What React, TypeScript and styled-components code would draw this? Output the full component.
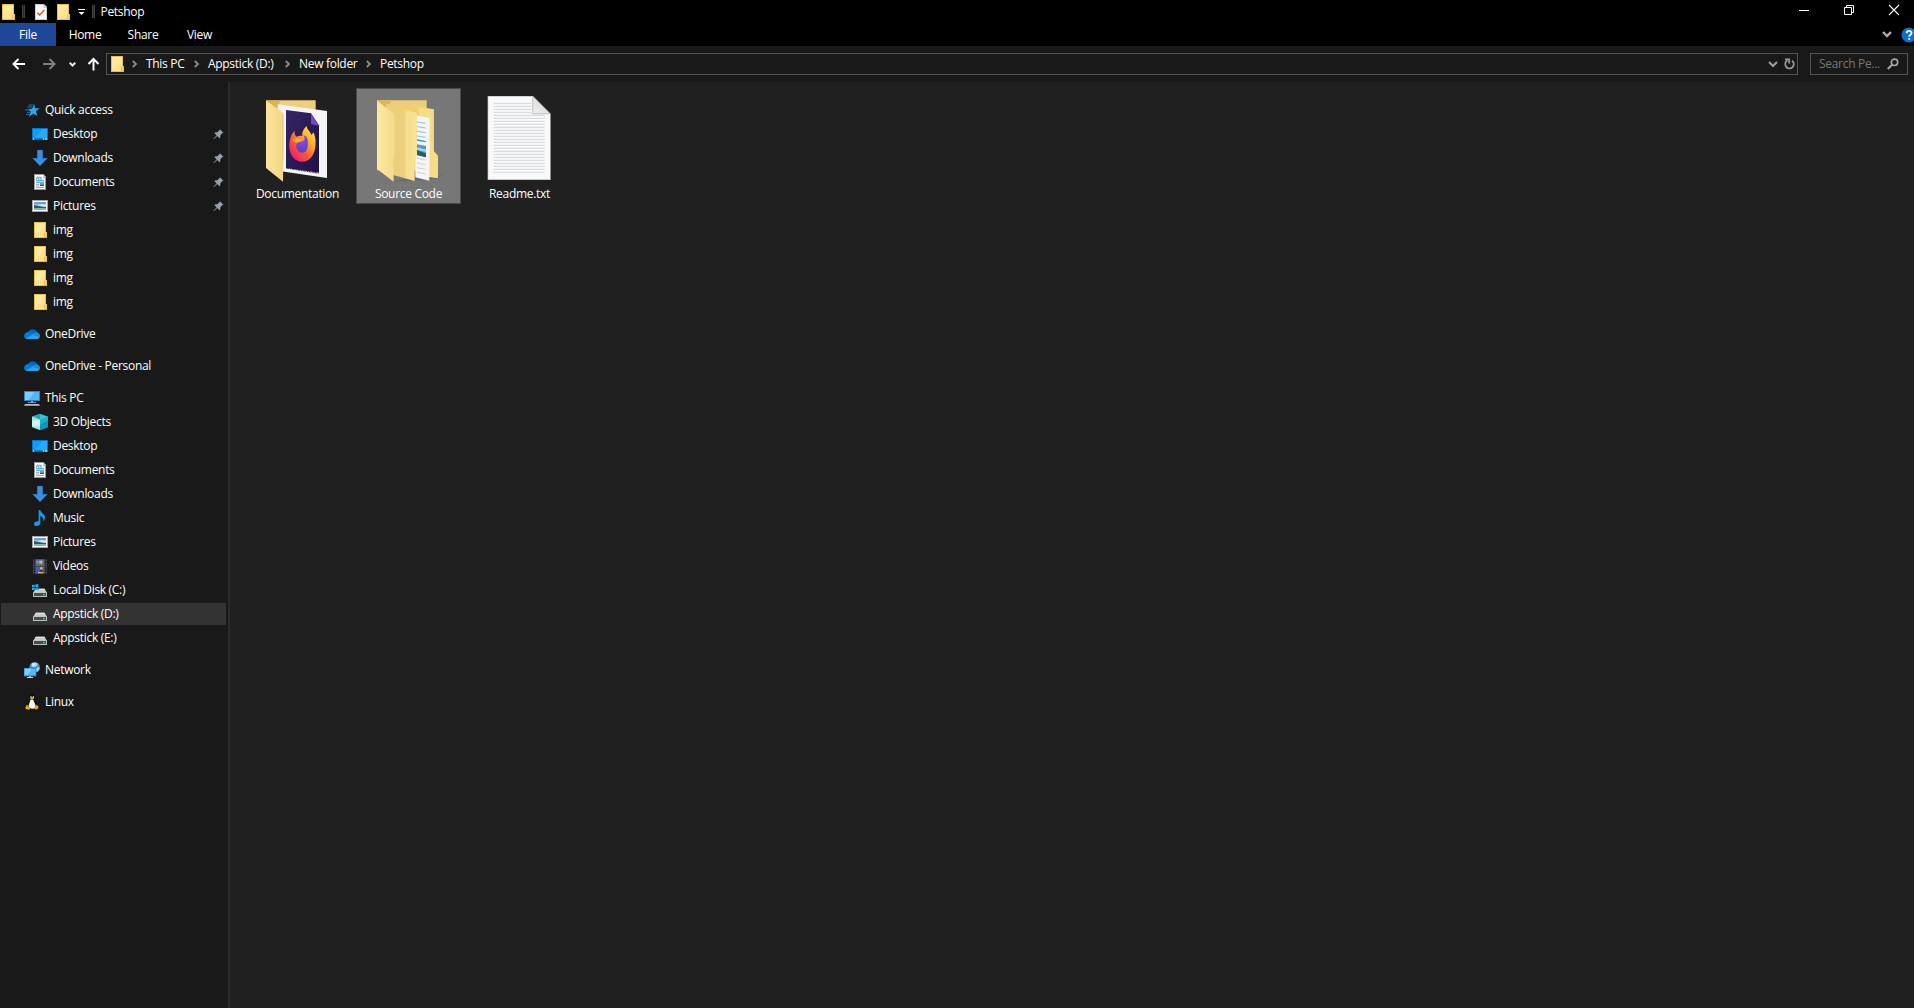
import React from "react";
import styled, { createGlobalStyle } from "styled-components";

const Global = createGlobalStyle`
  html, body { margin: 0; padding: 0; background: #202020; overflow: hidden; }
  * { box-sizing: border-box; }
  svg { display: block; flex: none; overflow: visible; }
`;

const Window = styled.div`
  display: flex;
  flex-direction: column;
  width: 100vw;
  height: 100vh;
  overflow: hidden;
  background: #191919;
  color: #fff;
  font-family: "Open Sans", "Noto Sans", sans-serif;
  font-size: 12px;
  line-height: 16px;
  letter-spacing: -0.3px;
  white-space: nowrap;
  cursor: default;
`;

const TitleBar = styled.header`
  display: flex;
  align-items: center;
  height: 23px;
  background: #000;
`;
const Slot = styled.span<{ $w: number }>`
  display: flex;
  align-items: center;
  flex: none;
  width: ${(p) => p.$w}px;
`;
const Title = styled.span`
  flex: 1;
`;
const CaptionButtons = styled.div`
  display: flex;
  align-self: flex-start;
  gap: 5px;
`;
const CaptionButton = styled.span`
  display: flex;
  align-items: center;
  justify-content: center;
  width: 40px;
  height: 20px;
`;

const RibbonTabs = styled.nav`
  display: flex;
  align-items: center;
  height: 23px;
  background: #000;
`;
const RibbonTab = styled.span<{ $w: number; $active?: boolean }>`
  display: flex;
  align-items: center;
  justify-content: center;
  width: ${(p) => p.$w}px;
  height: 23px;
  background: ${(p) => (p.$active ? "#1f4799" : "transparent")};
`;
const Spacer = styled.span`
  flex: 1;
`;

const NavBar = styled.div`
  display: flex;
  align-items: center;
  height: 36px;
  padding: 0 6px 0 12px;
  background: #191919;
`;
const AddressBox = styled.div`
  display: flex;
  align-items: center;
  flex: 1;
  height: 22px;
  margin-right: 12px;
  padding-left: 2px;
  border: 1px solid #535353;
`;
const Crumb = styled.span<{ $w: number }>`
  flex: none;
  width: ${(p) => p.$w}px;
`;
const RefreshButton = styled.span`
  display: flex;
  align-items: center;
  justify-content: center;
  width: 17px;
  height: 20px;
  border-left: 1px solid #121212;
`;
const SearchBox = styled.div`
  display: flex;
  align-items: center;
  justify-content: space-between;
  width: 98px;
  height: 22px;
  padding: 0 8px;
  border: 1px solid #535353;
  color: #787878;
`;

const Body = styled.div`
  display: flex;
  flex: 1;
  min-height: 0;
`;
const Sidebar = styled.aside`
  display: flex;
  flex-direction: column;
  gap: 8px;
  width: 230px;
  padding: 16px 2px 0 1px;
  border-right: 2px solid #2b2b2b;
`;
const Group = styled.div`
  display: flex;
  flex-direction: column;
`;
const Row = styled.div<{ $child?: boolean; $selected?: boolean }>`
  display: flex;
  align-items: center;
  gap: 5px;
  height: 22px;
  margin: 1px 0;
  padding-left: ${(p) => (p.$child ? 31 : 23)}px;
  padding-right: 2px;
  background: ${(p) => (p.$selected ? "#333333" : "transparent")};
`;
const RowLabel = styled.span`
  flex: 1;
`;

const Content = styled.main`
  display: flex;
  align-items: flex-start;
  flex: 1;
  gap: 6px;
  padding: 6px 0 0 15px;
  background: #202020;
`;
const Tile = styled.div<{ $selected?: boolean }>`
  display: flex;
  flex-direction: column;
  align-items: center;
  width: 105px;
  height: 116px;
  background: ${(p) => (p.$selected ? "#777777" : "transparent")};
  box-shadow: ${(p) => (p.$selected ? "inset 0 0 0 1px #4a4a4a" : "none")};
`;
const TileLabel = styled.span`
  margin-top: -2px;
`;

/* ---------- small icons, drawn on a 48-unit grid ---------- */

const Icon = ({ children, size = 16 }: { children: React.ReactNode; size?: number }) => (
  <svg width={size} height={size} viewBox="0 0 48 48">{children}</svg>
);

const FolderGlyph = () => (
  <Icon>
    <path d="M6 0h36v30h3v18H6z" fill="#e8bf45" />
    <path d="M9 3h30v27l-3 3v12H9z" fill="#ffe38c" />
    <path d="M9 3h30v8L9 38z" fill="#ffe9a2" />
    <path d="M39 30h3v15h-3z" fill="#fbd75f" />
  </Icon>
);

const QuickAccess = () => (
  <Icon>
    <path d="M31 5l2 14h14l-11 9 4 14-12-7-13 9 5-15-8-8 12-1z" fill="#2ba4f2" />
    <path d="M14 9h13M10 15h14M3 24h13M9 31h9M6 38h10" stroke="#1c79bd" strokeWidth="3" />
  </Icon>
);

const DesktopIcon = () => (
  <Icon>
    <rect x="0" y="6" width="48" height="36" fill="#0078d0" />
    <rect x="3" y="9" width="42" height="28" fill="#109cfb" />
    <path d="M32 9h13v28H8z" fill="#27a9ff" />
    <path d="M3 39h3M33 39h3M39 39h6" stroke="#fff" strokeWidth="3" />
    <path d="M9 39h24" stroke="#0a63ad" strokeWidth="3" />
  </Icon>
);

const DownloadIcon = () => (
  <Icon>
    <path d="M15 0h18v24h14L24 48 1 24h14z" fill="#3a8fdc" />
    <path d="M15 0h3v27H6l-5-3h14zM33 0h-3v27h11l6-3H33z" fill="#2474bd" />
  </Icon>
);

const DocumentIcon = () => (
  <Icon>
    <path d="M6 0h27l9 9v39H6z" fill="#9b9b9b" />
    <path d="M9 3h24v8h6v34H9z" fill="#fafafa" />
    <path d="M33 0l9 9h-9z" fill="#cfcfcf" />
    <path d="M12 17l5-9 3 9M21 10h8M22 15h9M12 20h24M12 25h24" stroke="#2d8fd6" strokeWidth="2.600" fill="none" />
    <path d="M12 31h10M12 36h10M12 41h24" stroke="#858585" strokeWidth="2.200" />
    <rect x="24" y="28" width="12" height="8" fill="#2b5f86" />
    <path d="M25 29h10v3H25z" fill="#79bde6" />
  </Icon>
);

const PictureIcon = () => (
  <Icon>
    <rect x="0" y="6" width="48" height="36" fill="#a6a6a6" />
    <rect x="3" y="9" width="42" height="30" fill="#fff" />
    <rect x="6" y="12" width="36" height="24" fill="#cfe8f7" />
    <path d="M6 12h36v7l-12-1-14 2-10-1z" fill="#6a9fe0" />
    <path d="M6 21c10 1 22 6 36 6v3H6z" fill="#2d5d58" />
    <path d="M6 30h36v6H6z" fill="#86b3b8" />
  </Icon>
);

const OneDriveIcon = () => (
  <Icon>
    <path d="M10 22c3-12 20-18 29-5 1 2 0 4-2 6L14 29z" fill="#0562bd" />
    <path d="M10 19c8-3 14 1 19 8L7 39c-9-2-9-18 3-20z" fill="#0a78d8" />
    <path d="M31 20c12-5 18 4 17 13l-8 3-18-11z" fill="#118bdf" />
    <path d="M5 38l20-12c8 1 14 6 22 8-1 4-4 5-8 5H10c-2 0-4 0-5-1z" fill="#2aa6ea" />
  </Icon>
);

const PcIcon = () => (
  <Icon>
    <rect x="0" y="3" width="48" height="30" fill="#2d86c2" />
    <rect x="3" y="6" width="42" height="24" fill="#52b5f5" />
    <path d="M3 6h28L14 30H3z" fill="#7fcbff" />
    <path d="M21 33h6v3h9v3H12v-3h9z" fill="#8e9aa2" />
    <path d="M3 42h42l3 5H0z" fill="#b4c1ca" />
  </Icon>
);

const CubeIcon = () => (
  <Icon>
    <path d="M24 0l24 8v31l-24 9L0 39V8z" fill="#28bccb" />
    <path d="M24 0l24 8-24 9L0 8z" fill="#39c7cf" />
    <path d="M24 0L6 6l18 11z" fill="#20a6b0" />
    <path d="M0 8l24 9v31L0 39z" fill="#a5e6e3" />
    <path d="M0 20l24-3v20L0 35z" fill="#cdf4ef" />
    <path d="M24 17l24-9v31l-24 9z" fill="#15b3cf" />
    <path d="M24 33l24-14v20l-24 9z" fill="#0799bd" />
  </Icon>
);

const MusicIcon = () => (
  <Icon>
    <path d="M20 0h5c1 8 14 12 14 22 0 5-2 9-5 12 1-10-3-14-9-16v21c0 5-5 9-11 9s-8-3-8-6c0-6 7-9 14-8z" fill="#0c9bf6" />
  </Icon>
);

const VideoIcon = () => (
  <Icon>
    <rect x="3" y="3" width="42" height="45" fill="#4a4a4a" />
    <path d="M7 3v45M41 3v45" stroke="#151515" strokeWidth="4" strokeDasharray="4 3" />
    <rect x="12" y="5" width="24" height="18" fill="#3974c9" />
    <path d="M12 19h24v4H12z" fill="#2a8b60" />
    <path d="M12 9h8v6h-8z" fill="#ed5e7a" />
    <path d="M22 8h9v9h-9z" fill="#f1b43a" />
    <rect x="12" y="27" width="24" height="19" fill="#315fca" />
    <path d="M24 28h8v7h-8zM18 42h15v4H18z" fill="#e3b05c" />
    <path d="M25 35h6v6h-6z" fill="#301f35" />
  </Icon>
);

const DriveIcon = ({ system }: { system?: boolean }) => (
  <Icon>
    <path d="M11 20h27l7 13H3z" fill="#c9cccf" />
    <path d="M12 20h25l2 4H10z" fill="#dfe1e3" />
    <rect x="3" y="32" width="42" height="13" fill="#bcbfc2" />
    <rect x="6" y="33" width="36" height="9" fill="#484c4f" />
    <rect x="33" y="36" width="5" height="4" fill="#3ee04c" />
    {system && (
      <>
        <path d="M0 5h20v18H0z" fill="#191919" />
        <path d="M0 9l8-1v7H0zM10 7.500l9-1.500v9h-9zM0 17h8v7H0zM10 17h9v8l-9-1z" fill="#10b5f2" />
      </>
    )}
  </Icon>
);

const NetworkIcon = () => (
  <Icon>
    <circle cx="32" cy="16" r="16" fill="#4488b8" />
    <path d="M22 5c6-5 14-5 20 0l-3 8-8 3-8-2zM34 22l8-8 5 5c-1 6-4 9-8 11z" fill="#a5d3e9" />
    <path d="M26 3l8 2-3 6-7 1z" fill="#d9edf5" />
    <rect x="0" y="18" width="37" height="25" fill="#2d86c2" />
    <rect x="2" y="20" width="33" height="20" fill="#55b8f8" />
    <path d="M2 20h21L11 40H2z" fill="#82cdff" />
    <path d="M16 42h5v3h6v3H9v-3h7z" fill="#c6d0d6" />
  </Icon>
);

const LinuxIcon = () => (
  <Icon>
    <path d="M24 0c7 0 9 5 9 12 0 8 8 12 8 24 0 6-7 9-16 9S8 43 8 36c0-10 8-15 8-24 0-7 2-12 8-12z" fill="#0c0c0c" />
    <path d="M19 17h9c1 6 7 12 7 21-1 5-6 6-11 6s-10-2-10-7c0-8 5-14 5-20z" fill="#f5f5f5" />
    <path d="M19 7h4v5h-4zM26 7h4v5h-4z" fill="#ddd" />
    <path d="M18 13l6-3 7 3-7 5z" fill="#f2af17" />
    <path d="M10 32l8 10c1 5-5 6-9 4l-5-2c1-5 1-10 6-12zM38 32l-6 8c-2 6 3 8 7 6l5-4c-2-3-1-8-6-10z" fill="#e5a60d" />
  </Icon>
);

const PinIcon = () => (
  <svg width="11" height="11" viewBox="0 0 33 33">
    <path d="M21 1l11 11-4 1-6 6v6l-3 3-6-7-11 10-1-1 10-11-7-6 4-3h5l6-6z" fill="#96a0aa" />
  </svg>
);

const CheckDoc = () => (
  <Icon>
    <path d="M6 0h26l10 9v39H6z" fill="#bdbdbd" />
    <path d="M8 2h24v9h8v35H8z" fill="#f7f9fb" />
    <path d="M32 0l10 9H32z" fill="#d8d8d8" />
    <path d="M13 26l7 7 14-15" stroke="#e8541f" strokeWidth="4.500" fill="none" />
  </Icon>
);

const BarDivider = () => (
  <svg width="3" height="13" viewBox="0 0 3 13">
    <path d="M.5 0v13M2.500 0v13" stroke="#414141" />
    <path d="M1.500 0v13" stroke="#2a2a2a" />
  </svg>
);

const Chevron = ({ w = 7, color = "#8c8c8c", right = false, stroke = 1.8 }: { w?: number; color?: string; right?: boolean; stroke?: number }) =>
  right ? (
    <svg width="5" height="8" viewBox="0 0 5 8">
      <path d="M.8 1L4 4 .8 7" stroke={color} strokeWidth={stroke} fill="none" />
    </svg>
  ) : (
    <svg width={w} height={w * 0.62} viewBox="0 0 10 6.200">
      <path d="M1 1l4 4 4-4" stroke={color} strokeWidth={(stroke * 10) / w} fill="none" />
    </svg>
  );

const Arrow = ({ color, turn = 0 }: { color: string; turn?: number }) => (
  <svg width="13" height="12" viewBox="0 0 13 12">
    <path transform={`rotate(${turn} 6.5 6)`} d="M13 6H2M6.500 1L1.500 6l5 5" stroke={color} strokeWidth="2" fill="none" />
  </svg>
);

/* ---------- large thumbnails, drawn at three units per pixel ---------- */

const DocumentationThumb = () => (
  <svg width="105" height="100" viewBox="15 24 315 300">
    <defs>
      <linearGradient id="flap" x1="0" x2="1">
        <stop offset="0" stopColor="#fde49c" />
        <stop offset="1" stopColor="#f4d684" />
      </linearGradient>
      <linearGradient id="fox" x1="1" y1="0" x2="0.200" y2="1">
        <stop offset="0" stopColor="#fff44f" />
        <stop offset="0.350" stopColor="#ffb62c" />
        <stop offset="0.650" stopColor="#ff5a36" />
        <stop offset="1" stopColor="#ee1574" />
      </linearGradient>
      <radialGradient id="globe" cx="0.500" cy="0.200" r="0.900">
        <stop offset="0" stopColor="#9a45f0" />
        <stop offset="1" stopColor="#4a43b8" />
      </radialGradient>
      <linearGradient id="page" x1="0" x2="1" y2="1">
        <stop offset="0" stopColor="#352565" />
        <stop offset="1" stopColor="#211143" />
      </linearGradient>
    </defs>
    <path d="M78 61h149v60H78z" fill="#efcf7c" />
    <path d="M80 62h40l-8 30z" fill="#deb34f" />
    <path d="M113 73l148 20v201l-148-22z" fill="#f5f5f6" />
    <path d="M138 90l75 10 24 36v142l-99-14z" fill="url(#page)" />
    <path d="M213 100l24 38-24-6z" fill="#7a42d4" />
    <path d="M139 264l97 16" stroke="#111" strokeWidth="2.500" strokeDasharray="8 3 4 2" />
    <path d="M164 152c-2 8 1 14 6 18 5-3 11-4 17-2-2-10 2-20 13-30 2 13 10 15 15 27l5-8c8 15 8 36 5 50-5 24-19 38-38 38-23 0-38-20-39-45-1-19 5-38 16-48z" fill="url(#fox)" />
    <path d="M190 166c12 2 15 14 13 31-1 14-8 22-18 21-10-2-16-10-16-20 0-6 3-10 6-12 9 1 17-3 19-9 0-4-2-8-4-11z" fill="url(#globe)" />
    <path d="M158 178c7-4 20-5 27 2-3 6-10 8-17 8l-9-5z" fill="#ffaf2d" />
    <path d="M78 62l36 24c11 8 16 12 17 20l-2 199-51-41z" fill="url(#flap)" />
    <path d="M127 245l3-8V104l-3-3z" fill="#e9c873" />
  </svg>
);

const SourceThumb = () => (
  <svg width="105" height="100" viewBox="18 24 315 300">
    <defs>
      <linearGradient id="front" x1="0" x2="1">
        <stop offset="0" stopColor="#fde7a3" />
        <stop offset="1" stopColor="#f6da88" />
      </linearGradient>
      <linearGradient id="middle" x1="0" x2="1">
        <stop offset="0" stopColor="#ebcf7d" />
        <stop offset="0.580" stopColor="#ebcf7d" />
        <stop offset="0.640" stopColor="#f6dc8c" />
        <stop offset="1" stopColor="#fbe295" />
      </linearGradient>
    </defs>
    <path d="M130 305l60-16 75-2 18-8-18 16-40 6z" fill="#606060" opacity="0.500" />
    <path d="M81 61h149v210H81z" fill="#efce7a" />
    <path d="M83 62h40l-8 30z" fill="#dfb453" />
    <path d="M108 71l143 17v125l13 15v66l-60-8z" fill="#efce72" />
    <path d="M205 82l46 6v125l13 15v66l-34-4z" fill="#f7dc88" />
    <path d="M196 106l43 8-1 188-42-10z" fill="#f5f5f5" />
    <path d="M201 126l26 4M201 140l26 4M201 154l26 4M201 168l26 4" stroke="#75b9d8" strokeWidth="2.500" />
    <path d="M201 180l26 5" stroke="#2499ca" strokeWidth="4" />
    <path d="M201 193l27 5v34l-27-7z" fill="#4f98d7" />
    <path d="M201 203c8-3 16 6 27 5v7l-27-4z" fill="#a9d7ef" />
    <path d="M201 210l27 11v11l-27-7z" fill="#245c69" />
    <path d="M201 235l26 5M201 249l26 5M201 263l26 5M201 277l26 5" stroke="#c7c7c7" strokeWidth="2.500" />
    <path d="M108 71l90 27c2 1 3 3 3 5v125l-7 10v65l-86-24z" fill="url(#middle)" />
    <path d="M81 62l42 32c9 7 11 10 11 17v118l-4 10 1 66-50-38z" fill="url(#front)" />
  </svg>
);

const ReadmeThumb = () => {
  const lines = Array.from({ length: 24 }, (_, i) => 70 + i * 9);
  return (
    <svg width="105" height="100" viewBox="6 24 315 300">
      <defs>
        <linearGradient id="fold" x1="0" y1="1" x2="1" y2="0">
          <stop offset="0" stopColor="#f1f1f1" />
          <stop offset="1" stopColor="#cfcfcf" />
        </linearGradient>
      </defs>
      <path d="M68 48h136l53 53v199H68z" fill="#c5c7c9" />
      <path d="M70 50h133l52 52v195H70z" fill="#f7f9fa" />
      {lines.map((y, i) => (
        <path key={y} d={`M86 ${y}h${i < 4 ? 114 : 153}`} stroke="#d5d7d9" strokeWidth="3" />
      ))}
      <path d="M202 48l55 55h-55z" fill="#bcbec0" />
      <path d="M205 52l48 48h-48z" fill="url(#fold)" />
    </svg>
  );
};

/* ---------- data ---------- */

type Item = { label: string; icon: React.ReactNode; pinned?: boolean; selected?: boolean };
type Section = { head: Item; items: Item[] };

const sections: Section[] = [
  {
    head: { label: "Quick access", icon: <QuickAccess /> },
    items: [
      { label: "Desktop", icon: <DesktopIcon />, pinned: true },
      { label: "Downloads", icon: <DownloadIcon />, pinned: true },
      { label: "Documents", icon: <DocumentIcon />, pinned: true },
      { label: "Pictures", icon: <PictureIcon />, pinned: true },
      { label: "img", icon: <FolderGlyph /> },
      { label: "img", icon: <FolderGlyph /> },
      { label: "img", icon: <FolderGlyph /> },
      { label: "img", icon: <FolderGlyph /> },
    ],
  },
  { head: { label: "OneDrive", icon: <OneDriveIcon /> }, items: [] },
  { head: { label: "OneDrive - Personal", icon: <OneDriveIcon /> }, items: [] },
  {
    head: { label: "This PC", icon: <PcIcon /> },
    items: [
      { label: "3D Objects", icon: <CubeIcon /> },
      { label: "Desktop", icon: <DesktopIcon /> },
      { label: "Documents", icon: <DocumentIcon /> },
      { label: "Downloads", icon: <DownloadIcon /> },
      { label: "Music", icon: <MusicIcon /> },
      { label: "Pictures", icon: <PictureIcon /> },
      { label: "Videos", icon: <VideoIcon /> },
      { label: "Local Disk (C:)", icon: <DriveIcon system /> },
      { label: "Appstick (D:)", icon: <DriveIcon />, selected: true },
      { label: "Appstick (E:)", icon: <DriveIcon /> },
    ],
  },
  { head: { label: "Network", icon: <NetworkIcon /> }, items: [] },
  { head: { label: "Linux", icon: <LinuxIcon /> }, items: [] },
];

const crumbs = [
  { label: "This PC", w: 48 },
  { label: "Appstick (D:)", w: 77 },
  { label: "New folder", w: 67 },
  { label: "Petshop", w: 60 },
];

export default function App() {
  return (
    <Window>
      <Global />
      <TitleBar>
        <Slot $w={22}><FolderGlyph /></Slot>
        <Slot $w={11}><BarDivider /></Slot>
        <Slot $w={22}><CheckDoc /></Slot>
        <Slot $w={23}><FolderGlyph /></Slot>
        <Slot $w={14}>
          <svg width="7" height="7" viewBox="0 0 7 7">
            <path d="M0 1h7v1H0zM.5 4h6l-3 3z" fill="#fff" />
          </svg>
        </Slot>
        <Slot $w={8.5}><BarDivider /></Slot>
        <Title>Petshop</Title>
        <CaptionButtons>
          <CaptionButton>
            <svg width="10" height="10"><path d="M0 5.500h10" stroke="#fff" /></svg>
          </CaptionButton>
          <CaptionButton>
            <svg width="10" height="10"><path d="M.5 2.500h7v7h-7zM2.500 2.500v-2h7v7h-2" stroke="#fff" fill="none" /></svg>
          </CaptionButton>
          <CaptionButton>
            <svg width="10" height="10"><path d="M0 0l10 10M10 0L0 10" stroke="#fff" strokeWidth="1.100" /></svg>
          </CaptionButton>
        </CaptionButtons>
      </TitleBar>

      <RibbonTabs>
        <RibbonTab $w={56} $active>File</RibbonTab>
        <RibbonTab $w={58}>Home</RibbonTab>
        <RibbonTab $w={58}>Share</RibbonTab>
        <RibbonTab $w={55}>View</RibbonTab>
        <Spacer />
        <Slot $w={19}><Chevron w={10} color="#b0b0b0" stroke={2.4} /></Slot>
        <Slot $w={13}>
          <svg width="16" height="16" viewBox="0 0 16 16">
            <circle cx="8" cy="8" r="7.500" fill="#0f6fd0" />
            <path d="M5.700 6.200c0-3 4.900-3 4.900-.2 0 1.800-2.400 1.800-2.400 3.700" stroke="#fff" strokeWidth="1.800" fill="none" />
            <circle cx="8.200" cy="12" r="1.100" fill="#fff" />
          </svg>
        </Slot>
      </RibbonTabs>

      <NavBar>
        <Slot $w={31}><Arrow color="#fff" /></Slot>
        <Slot $w={26}><Arrow color="#808080" turn={180} /></Slot>
        <Slot $w={17.5}><Chevron color="#e6e6e6" stroke={2} /></Slot>
        <Slot $w={19.5}><Arrow color="#fff" turn={90} /></Slot>
        <AddressBox>
          <Slot $w={23}><FolderGlyph /></Slot>
          {crumbs.map((c) => (
            <React.Fragment key={c.label}>
              <Slot $w={14}><Chevron right /></Slot>
              <Crumb $w={c.w}>{c.label}</Crumb>
            </React.Fragment>
          ))}
          <Spacer />
          <Slot $w={12}><Chevron w={10} color="#9b9b9b" stroke={2.2} /></Slot>
          <RefreshButton>
            <svg width="11" height="12" viewBox="0 0 11 12">
              <path d="M3.300 2.500A4.300 4.300 0 1 0 8 2.700M1 1.300h4.200v4.200" stroke="#9b9b9b" strokeWidth="1.700" fill="none" />
            </svg>
          </RefreshButton>
        </AddressBox>
        <SearchBox>
          <span>Search Pe...</span>
          <svg width="12" height="12" viewBox="0 0 12 12">
            <circle cx="7.500" cy="4.300" r="3.200" stroke="#a8a8a8" strokeWidth="1.600" fill="none" />
            <path d="M5 6.800L.8 11" stroke="#a8a8a8" strokeWidth="2" />
          </svg>
        </SearchBox>
      </NavBar>

      <Body>
        <Sidebar>
          {sections.map((s) => (
            <Group key={s.head.label}>
              <Row>
                {s.head.icon}
                <RowLabel>{s.head.label}</RowLabel>
              </Row>
              {s.items.map((it, i) => (
                <Row key={i} $child $selected={it.selected}>
                  {it.icon}
                  <RowLabel>{it.label}</RowLabel>
                  {it.pinned && <PinIcon />}
                </Row>
              ))}
            </Group>
          ))}
        </Sidebar>
        <Content>
          <Tile><DocumentationThumb /><TileLabel>Documentation</TileLabel></Tile>
          <Tile $selected><SourceThumb /><TileLabel>Source Code</TileLabel></Tile>
          <Tile><ReadmeThumb /><TileLabel>Readme.txt</TileLabel></Tile>
        </Content>
      </Body>
    </Window>
  );
}
